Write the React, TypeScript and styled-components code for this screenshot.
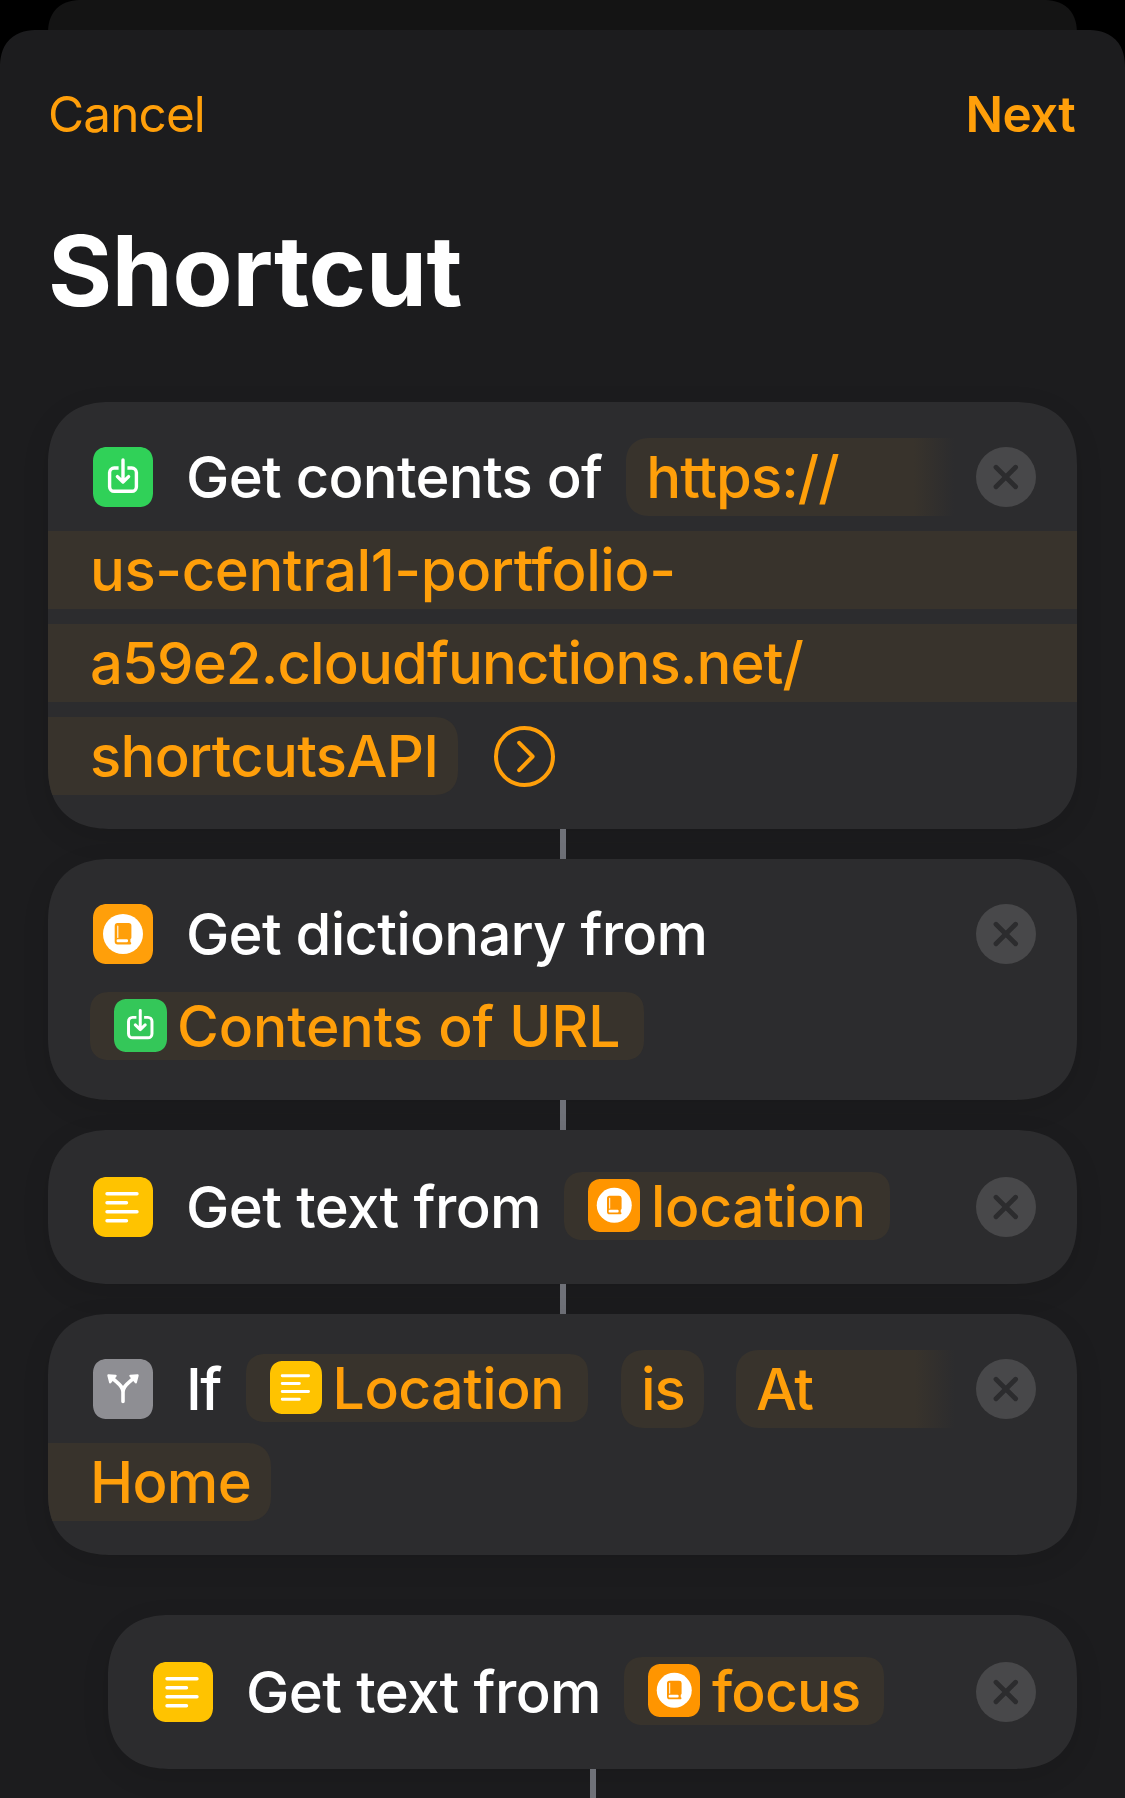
import React from "react";
import styled, { createGlobalStyle, css } from "styled-components";

const accent = "#ff9f0a";
const pillColor = "#38332c";
const cardColor = "#2c2c2e";

const GlobalStyle = createGlobalStyle`
  html, body { margin: 0; background: #000; }
  body {
    font-family: Inter, "Liberation Sans", sans-serif;
    overflow: hidden;
  }
  * { box-sizing: border-box; }
  svg { display: block; }
`;

const smooth = (radius: number) => css`
  border-radius: ${radius}px;
  corner-shape: superellipse(1.25);
`;

const Screen = styled.div`
  width: 1125px;
  height: 1798px;
  background: #000;
  overflow: hidden;
  display: flex;
  flex-direction: column;
`;

const BackSheet = styled.div`
  flex: none;
  height: 70px;
  margin: 0 48px -40px;
  background: #141414;
  ${smooth(34)}
`;

const Sheet = styled.main`
  flex: none;
  width: 1125px;
  height: 1768px;
  background: #1c1c1e;
  isolation: isolate;
  overflow: hidden;
  ${smooth(38)}
  border-bottom-left-radius: 0;
  border-bottom-right-radius: 0;
`;

const NavBar = styled.nav`
  display: flex;
  justify-content: space-between;
  align-items: center;
  height: 168px;
  padding: 0 50px 0 48px;
`;

const NavButton = styled.button<{ $bold?: boolean }>`
  border: 0;
  padding: 0;
  background: none;
  color: ${accent};
  font-family: inherit;
  font-size: 49.5px;
  line-height: 60px;
  font-weight: ${(p) => (p.$bold ? 600 : 400)};
  letter-spacing: ${(p) => (p.$bold ? -0.7 : -0.9)}px;
`;

const Title = styled.h1`
  margin: 0;
  padding: 14px 0 0 48px;
  height: 204px;
  color: #fff;
  font-size: 98px;
  line-height: 118px;
  font-weight: 700;
  letter-spacing: -0.3px;
`;

const Actions = styled.section`
  display: flex;
  flex-direction: column;
  padding: 0 48px;
`;

const Card = styled.article<{ $height: number; $indent?: boolean }>`
  flex: none;
  height: ${(p) => p.$height}px;
  margin-left: ${(p) => (p.$indent ? 60 : 0)}px;
  padding-top: ${(p) => (p.$height < 200 ? 30.5 : 28.5)}px;
  background: ${cardColor};
  box-shadow: 0 8px 28px rgba(0, 0, 0, 0.11);
  overflow: hidden;
  ${smooth(63)}
`;

const Connector = styled.div<{ $indent?: boolean }>`
  flex: none;
  width: 6px;
  height: 30px;
  margin-left: ${(p) => (p.$indent ? 542 : 512)}px;
  background: #6f7178;
`;

const BranchGap = styled.div`
  height: 60px;
`;

const Line = styled.div<{ $inset?: number }>`
  display: flex;
  align-items: center;
  height: 93px;
  padding-left: ${(p) => p.$inset ?? 0}px;
`;

const HeadLine = styled(Line)`
  padding: 0 41px 0 45px;
`;

const Label = styled.span<{ $tracking: number }>`
  flex: none;
  color: #fff;
  font-size: 58px;
  line-height: 78px;
  font-weight: 500;
  white-space: pre;
  letter-spacing: ${(p) => p.$tracking}px;
`;

const Lead = styled(Label)<{ $after?: number }>`
  margin-left: 33px;
  margin-right: ${(p) => p.$after ?? 0}px;
`;

const Value = styled(Label)`
  color: ${accent};
`;

const VariableName = styled(Value)`
  padding-top: 2px;
  font-size: 57px;
  line-height: 68px;
`;

const Pill = styled.span`
  flex: none;
  display: flex;
  align-items: center;
  height: 78px;
  padding: 0 20px;
  background: ${pillColor};
  ${smooth(25)}
`;

const OperatorPill = styled(Pill)`
  width: 83px;
  margin: 0 32px 0 33px;
`;

const FadePill = styled(Pill)<{ $width: number }>`
  width: ${(p) => p.$width}px;
  background: linear-gradient(
    to right,
    ${pillColor} calc(100% - 40px),
    ${cardColor} 100%
  );
  border-top-right-radius: 0;
  border-bottom-right-radius: 0;
`;

const Band = styled(Pill)`
  flex: 1;
  padding: 0 0 0 42px;
  border-radius: 0;
`;

const TailPill = styled(Pill)`
  padding-left: 42px;
  border-top-left-radius: 0;
  border-bottom-left-radius: 0;
`;

const VariablePill = styled(Pill)<{ $gap?: number }>`
  height: 68px;
  padding: 0 24px;
  gap: ${(p) => p.$gap ?? 10.5}px;
  margin-bottom: 2px;
  ${smooth(20)}
`;

const Tile = styled.span<{ $color: string; $small?: boolean }>`
  flex: none;
  width: ${(p) => (p.$small ? 52.5 : 60)}px;
  height: ${(p) => (p.$small ? 52.5 : 60)}px;
  margin-bottom: ${(p) => (p.$small ? 1.5 : 0)}px;
  background: ${(p) => p.$color};
  overflow: hidden;
  ${(p) => smooth(p.$small ? 14 : 15)}
  svg { width: 100%; height: 100%; }
`;

const CloseButton = styled.button`
  flex: none;
  width: 60px;
  height: 60px;
  margin-left: auto;
  padding: 0;
  border: 0;
  border-radius: 50%;
  background: #48484a;
`;

const DisclosureIcon = styled.svg`
  flex: none;
  width: 61px;
  height: 61px;
  margin-left: 36px;
`;

type IconKind = "url" | "dictionary" | "text" | "branch";

const largeColors: Record<IconKind, string> = {
  url: "#30d158",
  dictionary: "#ff9f0a",
  text: "#ffc300",
  branch: "#8e8e93",
};
const smallColors: Record<IconKind, string> = {
  ...largeColors,
  url: "#34c759",
  dictionary: "#ff9500",
};

function Glyph({ kind, color }: { kind: IconKind; color: string }) {
  const line = {
    fill: "none",
    stroke: "#fff",
    strokeWidth: 3.4,
    strokeLinecap: "round" as const,
    strokeLinejoin: "round" as const,
  };
  switch (kind) {
    case "url":
      return (
        <svg viewBox="0 0 60 60" {...line}>
          <path d="M25.6 21H21.2a4.6 4.6 0 0 0-4.6 4.6V39.7a4.6 4.6 0 0 0 4.6 4.6H38.8a4.6 4.6 0 0 0 4.6-4.6V25.6a4.6 4.6 0 0 0-4.6-4.6H34.4" strokeLinecap="butt" />
          <path d="M30 13V34.4M24.4 29.6L30 35L35.6 29.6" />
        </svg>
      );
    case "dictionary":
      return (
        <svg viewBox="0 0 60 60">
          <circle cx="30" cy="30" r="20" fill="#fff" />
          <path d="M24.6 19H35.6a2.8 2.8 0 0 1 2.8 2.8V33.6a1.6 1.6 0 0 1-1 1.5v3a1.2 1.2 0 0 1 0 2.3H24.6a2.9 2.9 0 0 1-2.9-2.9V21.9A2.9 2.9 0 0 1 24.6 19Z" fill={color} />
          <path d="M24.8 22V33.4" stroke="#fff" strokeWidth="1.1" strokeLinecap="round" />
          <rect x="23.6" y="35.2" width="11.4" height="3" rx="1.2" fill="#fff" />
        </svg>
      );
    case "text":
      return (
        <svg viewBox="0 0 60 60" {...line}>
          <path d="M14 16.8H44M14 25.8H33.5M14 34.8H44M14 43.8H33.5" />
        </svg>
      );
    case "branch":
      return (
        <svg viewBox="0 0 60 60" {...line}>
          <path d="M30 42.4V33C30 26.6 24.4 24.2 19.6 19.2M30 33C30 26.6 35.6 24.2 40.4 19.2" strokeWidth="3.6" />
          <path d="M15.4 16.4L22.6 16.8L17.2 23.4ZM44.6 16.4L37.4 16.8L42.8 23.4Z" fill="#fff" strokeWidth="2.2" />
        </svg>
      );
  }
}

function ActionIcon({ kind }: { kind: IconKind }) {
  return (
    <Tile $color={largeColors[kind]}>
      <Glyph kind={kind} color={largeColors[kind]} />
    </Tile>
  );
}

function Variable({ kind, name, tracking, gap }: { kind: IconKind; name: string; tracking: number; gap?: number }) {
  return (
    <VariablePill $gap={gap}>
      <Tile $small $color={smallColors[kind]}>
        <Glyph kind={kind} color={smallColors[kind]} />
      </Tile>
      <VariableName $tracking={tracking}>{name}</VariableName>
    </VariablePill>
  );
}

function Close() {
  return (
    <CloseButton aria-label="Remove action">
      <svg width="60" height="60" viewBox="0 0 60 60" stroke={cardColor} strokeWidth="4.8" strokeLinecap="round">
        <path d="M20 20.2L39.6 39.8M39.6 20.2L20 39.8" />
      </svg>
    </CloseButton>
  );
}

function Disclosure() {
  return (
    <DisclosureIcon viewBox="0 0 61 61" fill="none" stroke={accent} strokeLinecap="round" strokeLinejoin="round">
      <circle cx="30.5" cy="30.5" r="28.5" strokeWidth="4" />
      <path d="M25.2 16.8L38.6 30.5L25.2 44.2" strokeWidth="4" />
    </DisclosureIcon>
  );
}

export default function App() {
  return (
    <Screen>
      <GlobalStyle />
      <BackSheet />
      <Sheet>
        <NavBar>
          <NavButton>Cancel</NavButton>
          <NavButton $bold>Next</NavButton>
        </NavBar>
        <Title>Shortcut</Title>
        <Actions>
          <Card $height={427}>
            <HeadLine>
              <ActionIcon kind="url" />
              <Lead $tracking={-0.72} $after={24}>Get contents of</Lead>
              <FadePill $width={328}>
                <Value $tracking={-1.0}>https://</Value>
              </FadePill>
              <Close />
            </HeadLine>
            <Line>
              <Band><Value $tracking={-0.42}>us-central1-portfolio-</Value></Band>
            </Line>
            <Line>
              <Band><Value $tracking={-0.88}>a59e2.cloudfunctions.net/</Value></Band>
            </Line>
            <Line>
              <TailPill><Value $tracking={-0.7}>shortcutsAPI</Value></TailPill>
              <Disclosure />
            </Line>
          </Card>
          <Connector />
          <Card $height={241}>
            <HeadLine>
              <ActionIcon kind="dictionary" />
              <Lead $tracking={-0.77}>Get dictionary from</Lead>
              <Close />
            </HeadLine>
            <Line $inset={42}>
              <Variable kind="url" name="Contents of URL" tracking={-0.08} />
            </Line>
          </Card>
          <Connector />
          <Card $height={154}>
            <HeadLine>
              <ActionIcon kind="text" />
              <Lead $tracking={-0.62} $after={23}>Get text from</Lead>
              <Variable kind="dictionary" name="location" tracking={-0.3} />
              <Close />
            </HeadLine>
          </Card>
          <Connector />
          <Card $height={241}>
            <HeadLine>
              <ActionIcon kind="branch" />
              <Lead $tracking={-1.5} $after={24.8}>If</Lead>
              <Variable kind="text" name="Location" tracking={-0.45} />
              <OperatorPill><Value $tracking={-1.2}>is</Value></OperatorPill>
              <FadePill $width={219}><Value $tracking={-1.5}>At</Value></FadePill>
              <Close />
            </HeadLine>
            <Line>
              <TailPill><Value $tracking={-0.7}>Home</Value></TailPill>
            </Line>
          </Card>
          <BranchGap />
          <Card $height={154} $indent>
            <HeadLine>
              <ActionIcon kind="text" />
              <Lead $tracking={-0.62} $after={23}>Get text from</Lead>
              <Variable kind="dictionary" name="focus" tracking={-0.8} gap={11.5} />
              <Close />
            </HeadLine>
          </Card>
          <Connector $indent />
        </Actions>
      </Sheet>
    </Screen>
  );
}
